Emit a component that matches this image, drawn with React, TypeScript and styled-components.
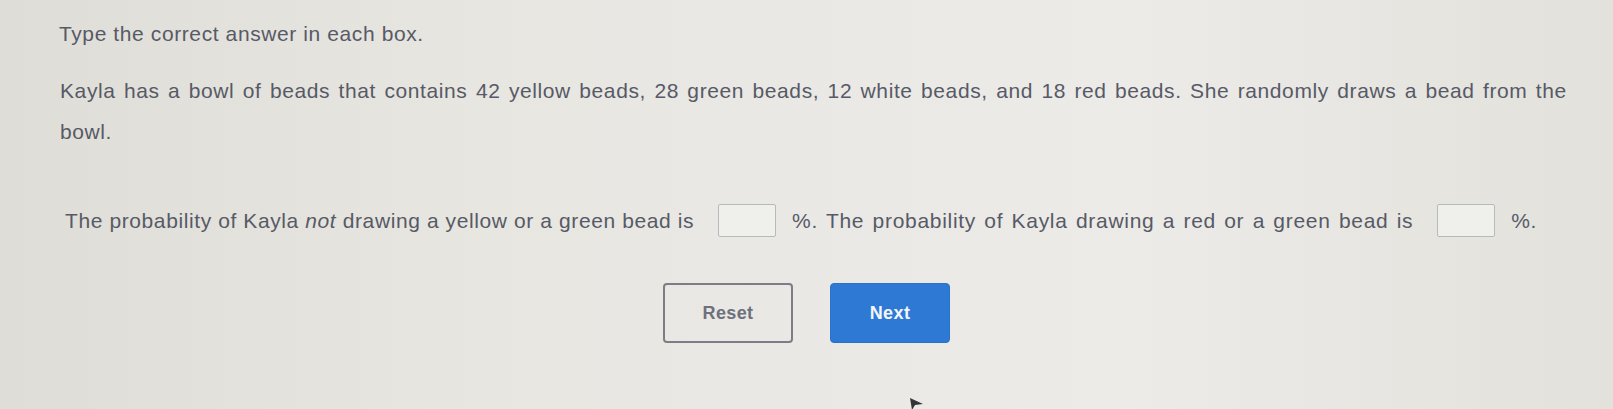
import React from 'react';
import styled, {createGlobalStyle} from "styled-components";

const GlobalStyle = createGlobalStyle`
    html, body {
        margin: 0;
        padding: 0;
    }
    body {
        font-family: "Liberation Sans", Arial, sans-serif;
        background: #e6e5e0;
    }
`

const Page = styled.div`
    position: relative;
    width: 1613px;
    height: 409px;
    overflow: hidden;
    box-sizing: border-box;
    padding: 22px 0 0 59px;
    color: #575a66;
    font-size: 21px;
    letter-spacing: 0.6px;
    background: linear-gradient(90deg, #dfddd7 0%, #e7e6e1 30%, #ecebe8 70%, #e2e1db 100%);
`

const Instruction = styled.p`
    margin: 0;
    line-height: 24px;
`

const Question = styled.p`
    margin: 24px 0 0 1px;
    max-width: 1520px;
    line-height: 41px;
    word-spacing: 2px;
`

const AnswerLine = styled.div`
    display: flex;
    align-items: center;
    margin: 52px 0 0 6px;
    white-space: pre;
`

const Sentence = styled.span<{ $spread?: boolean }>`
    word-spacing: ${p => p.$spread ? "1.8px" : "0"};
    letter-spacing: ${p => p.$spread ? "0.7px" : "0.6px"};
`

const AnswerBox = styled.span`
    display: inline-block;
    width: 56px;
    height: 31px;
    margin: 0 16px 0 24px;
    border: 1px solid #b9b9bb;
    border-radius: 2px;
    background: #efefec;
`

const Italic = styled.i`
    font-style: italic;
`

const Buttons = styled.div`
    display: flex;
    gap: 37px;
    margin: 46px 0 0 604px;
`

const Button = styled.button<{ $primary?: boolean }>`
    width: ${p => p.$primary ? "120px" : "130px"};
    height: 60px;
    font-family: "Liberation Sans", Arial, sans-serif;
    font-weight: bold;
    font-size: 18px;
    letter-spacing: 0.4px;
    border-radius: 4px;
    cursor: pointer;
    color: ${p => p.$primary ? "#f2f6fb" : "#6e717d"};
    background: ${p => p.$primary ? "#2e79d3" : "transparent"};
    border: ${p => p.$primary ? "1px solid #2a72c9" : "2px solid #7d7d88"};
`

const Cursor = styled.svg`
    position: absolute;
    left: 910px;
    top: 398px;
`

export default function App() {
    return (
        <>
            <GlobalStyle/>
            <Page>
                <Instruction>Type the correct answer in each box.</Instruction>
                <Question>
                    Kayla has a bowl of beads that contains 42 yellow beads, 28 green beads, 12 white beads, and 18 red beads. She randomly draws a bead from the bowl.
                </Question>
                <AnswerLine>
                    <Sentence>The probability of Kayla <Italic>not</Italic> drawing a yellow or a green bead is</Sentence>
                    <AnswerBox/>
                    <Sentence $spread>%. The probability of Kayla drawing a red or a green bead is</Sentence>
                    <AnswerBox/>
                    <Sentence>%.</Sentence>
                </AnswerLine>
                <Buttons>
                    <Button>Reset</Button>
                    <Button $primary>Next</Button>
                </Buttons>
                <Cursor width="14" height="12" viewBox="0 0 14 12">
                    <path d="M0 0 L13 6 L5 7 L2 12 Z" fill="#33343a"/>
                </Cursor>
            </Page>
        </>
    )
}
